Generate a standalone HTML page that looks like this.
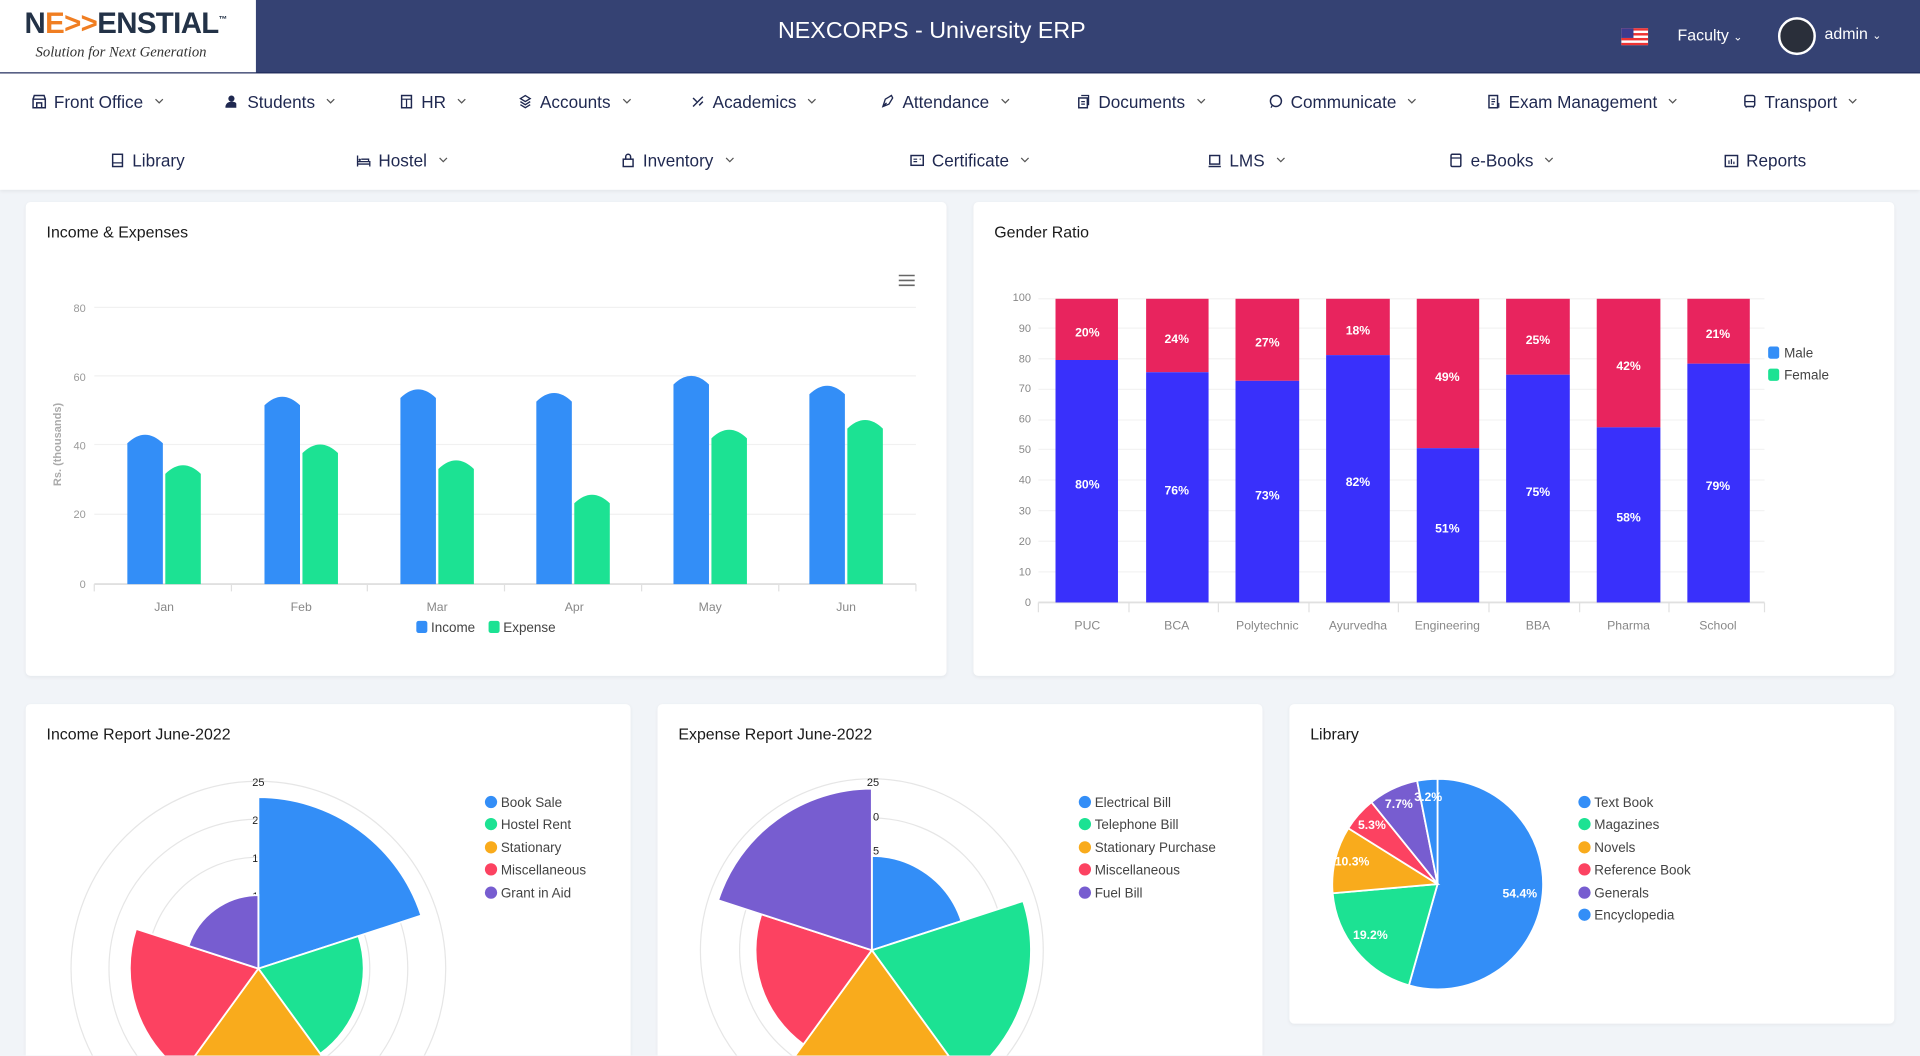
<!DOCTYPE html>
<html><head><meta charset="utf-8">
<style>
html,body{margin:0;padding:0;width:1920px;height:1056px;overflow:hidden;background:#f1f4f8;font-family:"Liberation Sans",sans-serif;}
#w{position:absolute;left:0;top:0;width:1568px;height:862px;overflow:hidden;transform:scale(1.22449);transform-origin:0 0;}
.hdr{position:absolute;left:0;top:0;width:1568px;height:59px;background:#354273;border-bottom:1px solid #1e2a5a;}
.logo{position:absolute;left:0;top:0;width:209px;height:59px;background:#fff;}
.nav{position:absolute;left:0;top:60px;width:1568px;height:95px;background:#fff;box-shadow:0 2px 3px rgba(0,0,0,.06);}
.ni{position:absolute;font-size:14px;color:#1f2850;white-space:nowrap;display:flex;align-items:center;gap:6px;}
.ni svg.ic{width:12px;height:12px;}
.ch{width:8px;height:6px;margin-left:3px}
.card{position:absolute;background:#fff;border-radius:4px;box-shadow:0 1px 3px rgba(0,0,0,.05);overflow:hidden;}
.ct{position:absolute;left:17px;top:17px;font-size:13px;color:#1a1a1a;}
svg text{font-family:"Liberation Sans",sans-serif;}
</style></head><body><div id="w">
<div class="hdr">
 <div class="logo">
  <div style="position:absolute;left:20px;top:6px;font-size:24px;font-weight:bold;color:#233247;letter-spacing:-0.5px">N<span style="color:#f07e22">E&gt;&gt;</span>ENSTIAL<sup style="font-size:7px">™</sup></div>
  <div style="position:absolute;left:29px;top:35px;font-size:12px;font-style:italic;color:#333;font-family:'Liberation Serif',serif">Solution for Next Generation</div>
 </div>
 <div style="position:absolute;left:0;width:1522px;top:15px;text-align:center;font-size:19px;color:#fff;">NEXCORPS - University ERP</div>
 <svg style="position:absolute;left:1324px;top:23px" width="22" height="14"><rect width="22" height="14" fill="#fff"/><g fill="#e33"><rect y="0" width="22" height="2"/><rect y="4" width="22" height="2"/><rect y="8" width="22" height="2"/><rect y="12" width="22" height="2"/></g><rect width="10" height="8" fill="#3c3b8e"/></svg>
 <div style="position:absolute;left:1370px;top:21px;font-size:13px;color:#fff">Faculty <span style="font-size:9px">⌄</span></div>
 <div style="position:absolute;left:1452px;top:14px;width:27px;height:27px;border-radius:50%;background:#2a2f3a;border:2px solid #fff"></div>
 <div style="position:absolute;left:1490px;top:20px;font-size:13px;color:#fff">admin <span style="font-size:9px">⌄</span></div>
</div>
<div class="nav">
 <svg width="0" height="0" style="position:absolute"><defs><polyline id="chv" points="1,1 4,4 7,1" fill="none" stroke="#555" stroke-width="1"/></defs></svg>
 <div class="ni" style="left:26px;top:15px"><svg class="ic" viewBox="0 0 12 12"><path d="M1 4h10v7H1zM1 4l1-3h8l1 3M4 11V7h4v4" fill="none" stroke="#1f2850" stroke-width="1.2"/></svg>Front Office<svg class="ch"><use href="#chv"/></svg></div>
 <div class="ni" style="left:184px;top:15px"><svg class="ic" viewBox="0 0 12 12"><circle cx="5" cy="3.5" r="2.5" fill="#1f2850"/><path d="M0 11c0-3 2-5 5-5s4 1 4 2v3z" fill="#1f2850"/></svg>Students<svg class="ch"><use href="#chv"/></svg></div>
 <div class="ni" style="left:326px;top:15px"><svg class="ic" viewBox="0 0 12 12"><rect x="2" y="1" width="8" height="10" fill="none" stroke="#1f2850" stroke-width="1.2"/><path d="M2 4h8M6 4v7" stroke="#1f2850"/></svg>HR<svg class="ch"><use href="#chv"/></svg></div>
 <div class="ni" style="left:423px;top:15px"><svg class="ic" viewBox="0 0 12 12"><path d="M6 1l4 2.5-4 2.5-4-2.5zM2 6l4 2.5 4-2.5M2 8.5l4 2.5 4-2.5" fill="none" stroke="#1f2850" stroke-width="1.1"/></svg>Accounts<svg class="ch"><use href="#chv"/></svg></div>
 <div class="ni" style="left:564px;top:15px"><svg class="ic" viewBox="0 0 12 12"><path d="M2 10L10 2M2 3l3 3M7 9l3-3" stroke="#1f2850" stroke-width="1.2" fill="none"/></svg>Academics<svg class="ch"><use href="#chv"/></svg></div>
 <div class="ni" style="left:719px;top:15px"><svg class="ic" viewBox="0 0 12 12"><path d="M2 10l2-6 5-3 1 2-3 5zM2 10l3-3" fill="none" stroke="#1f2850" stroke-width="1.1"/></svg>Attendance<svg class="ch"><use href="#chv"/></svg></div>
 <div class="ni" style="left:879px;top:15px"><svg class="ic" viewBox="0 0 12 12"><rect x="2" y="3" width="7" height="8" fill="none" stroke="#1f2850" stroke-width="1.2"/><path d="M4 1h6v8M4 6h3M4 8h3" stroke="#1f2850" fill="none"/></svg>Documents<svg class="ch"><use href="#chv"/></svg></div>
 <div class="ni" style="left:1036px;top:15px"><svg class="ic" viewBox="0 0 12 12"><circle cx="6" cy="5.5" r="4.5" fill="none" stroke="#1f2850" stroke-width="1.2"/><path d="M3 9l-1 2" stroke="#1f2850"/></svg>Communicate<svg class="ch"><use href="#chv"/></svg></div>
 <div class="ni" style="left:1214px;top:15px"><svg class="ic" viewBox="0 0 12 12"><rect x="2" y="1" width="7" height="10" fill="none" stroke="#1f2850" stroke-width="1.2"/><path d="M4 4h3M4 6h3M4 8h2M10 7v4" stroke="#1f2850"/></svg>Exam Management<svg class="ch"><use href="#chv"/></svg></div>
 <div class="ni" style="left:1423px;top:15px"><svg class="ic" viewBox="0 0 12 12"><rect x="2" y="1" width="8" height="9" rx="1.5" fill="none" stroke="#1f2850" stroke-width="1.2"/><path d="M2 6h8M3 11v-1M9 11v-1" stroke="#1f2850"/></svg>Transport<svg class="ch"><use href="#chv"/></svg></div>

 <div class="ni" style="left:90px;top:63px"><svg class="ic" viewBox="0 0 12 12"><rect x="2" y="1" width="8" height="10" fill="none" stroke="#1f2850" stroke-width="1.2"/><path d="M2 8h8" stroke="#1f2850"/></svg>Library</div>
 <div class="ni" style="left:291px;top:63px"><svg class="ic" viewBox="0 0 12 12"><path d="M1 2v9M1 9h10v2M1 7h10v2M4 5h6v2" fill="none" stroke="#1f2850" stroke-width="1.1"/><circle cx="2.8" cy="5.5" r="1" fill="#1f2850"/></svg>Hostel<svg class="ch"><use href="#chv"/></svg></div>
 <div class="ni" style="left:507px;top:63px"><svg class="ic" viewBox="0 0 12 12"><rect x="2" y="5" width="8" height="6" fill="none" stroke="#1f2850" stroke-width="1.2"/><path d="M4 5V3a2 2 0 014 0v2" fill="none" stroke="#1f2850" stroke-width="1.2"/></svg>Inventory<svg class="ch"><use href="#chv"/></svg></div>
 <div class="ni" style="left:743px;top:63px"><svg class="ic" viewBox="0 0 12 12"><rect x="1" y="2" width="10" height="8" fill="none" stroke="#1f2850" stroke-width="1.2"/><path d="M3 5h3M3 7h3M8 5h1" stroke="#1f2850"/></svg>Certificate<svg class="ch"><use href="#chv"/></svg></div>
 <div class="ni" style="left:986px;top:63px"><svg class="ic" viewBox="0 0 12 12"><rect x="2" y="2" width="8" height="7" fill="none" stroke="#1f2850" stroke-width="1.2"/><path d="M1 11h10" stroke="#1f2850" stroke-width="1.2"/></svg>LMS<svg class="ch"><use href="#chv"/></svg></div>
 <div class="ni" style="left:1183px;top:63px"><svg class="ic" viewBox="0 0 12 12"><rect x="2" y="1" width="8" height="10" rx="1" fill="none" stroke="#1f2850" stroke-width="1.2"/><path d="M2 4h8" stroke="#1f2850"/></svg>e-Books<svg class="ch"><use href="#chv"/></svg></div>
 <div class="ni" style="left:1408px;top:63px"><svg class="ic" viewBox="0 0 12 12"><rect x="1" y="2" width="10" height="9" fill="none" stroke="#1f2850" stroke-width="1.2"/><path d="M4 9V6M6 9V5M8 9V7" stroke="#1f2850"/></svg>Reports</div>
</div>

<div class="card" style="left:21px;top:165px;width:752px;height:387px">
 <div class="ct">Income &amp; Expenses</div>
</div>
<svg style="position:absolute;left:0;top:0" width="1568" height="862">
 <g stroke="#666" stroke-width="1.3"><path d="M734 225h13M734 229h13M734 233h13"/><path d="M1508 225h13M1508 229h13M1508 233h13"/></g>
 <g stroke="#f1f1f1"><path d="M77 251h671M77 307h671M77 363h671M77 420h671"/></g>
 <path d="M77 477h671" stroke="#e0e0e0" stroke-width="1.5"/>
 <g stroke="#e0e0e0"><path d="M77 477v6M189 477v6M300 477v6M412 477v6M524 477v6M636 477v6M748 477v6"/></g>
 <g font-size="9" fill="#999" text-anchor="end"><text x="70" y="255">80</text><text x="70" y="311">60</text><text x="70" y="367">40</text><text x="70" y="423">20</text><text x="70" y="480">0</text></g>
 <text transform="translate(50,397) rotate(-90)" font-size="9" font-weight="bold" fill="#aaa">Rs. (thousands)</text>
 <g font-size="10" fill="#888" text-anchor="middle"><text x="134" y="499">Jan</text><text x="246" y="499">Feb</text><text x="357" y="499">Mar</text><text x="469" y="499">Apr</text><text x="580" y="499">May</text><text x="691" y="499">Jun</text></g>
 <g fill="#338ef7">
  <path d="M104 477V362q14.5-14 29 0V477z"/>
  <path d="M216 477V331q14.5-14 29 0V477z"/>
  <path d="M327 477V325q14.5-14 29 0V477z"/>
  <path d="M438 477V328q14.5-14 29 0V477z"/>
  <path d="M550 477V314q14.5-14 29 0V477z"/>
  <path d="M661 477V322q14.5-14 29 0V477z"/>
 </g>
 <g fill="#1ce293">
  <path d="M135 477V387q14.5-14 29 0V477z"/>
  <path d="M247 477V370q14.5-14 29 0V477z"/>
  <path d="M358 477V383q14.5-14 29 0V477z"/>
  <path d="M469 477V411q14.5-14 29 0V477z"/>
  <path d="M581 477V358q14.5-14 29 0V477z"/>
  <path d="M692 477V350q14.5-14 29 0V477z"/>
 </g>
 <rect x="340" y="507" width="9" height="10" rx="2" fill="#338ef7"/><text x="352" y="516" font-size="11" fill="#444">Income</text>
 <rect x="399" y="507" width="9" height="10" rx="2" fill="#1ce293"/><text x="411" y="516" font-size="11" fill="#444">Expense</text>
</svg>

<div class="card" style="left:795px;top:165px;width:752px;height:387px">
 <div class="ct">Gender Ratio</div>
</div>
<svg style="position:absolute;left:0;top:0" width="1568" height="862">
 <g stroke="#f3f3f3"><path d="M848 244h593M848 268h593M848 293h593M848 318h593M848 343h593M848 367h593M848 392h593M848 417h593M848 442h593M848 467h593"/></g>
 <path d="M848 492h593" stroke="#e0e0e0" stroke-width="1.5"/>
 <g stroke="#e0e0e0"><path d="M848 492v8M922 492v8M995 492v8M1069 492v8M1142 492v8M1216 492v8M1290 492v8M1363 492v8M1441 492v8"/></g>
 <g font-size="9" fill="#888" text-anchor="end"><text x="842" y="246">100</text><text x="842" y="271">90</text><text x="842" y="296">80</text><text x="842" y="320">70</text><text x="842" y="345">60</text><text x="842" y="370">50</text><text x="842" y="395">40</text><text x="842" y="420">30</text><text x="842" y="445">20</text><text x="842" y="470">10</text><text x="842" y="495">0</text></g>
 <g fill="#e8245e">
  <rect x="862" y="244" width="51" height="50"/><rect x="936" y="244" width="51" height="60"/><rect x="1009" y="244" width="52" height="67"/><rect x="1083" y="244" width="52" height="46"/><rect x="1157" y="244" width="51" height="122"/><rect x="1230" y="244" width="52" height="62"/><rect x="1304" y="244" width="52" height="105"/><rect x="1378" y="244" width="51" height="53"/>
 </g>
 <g fill="#3930fb">
  <rect x="862" y="294" width="51" height="198"/><rect x="936" y="304" width="51" height="188"/><rect x="1009" y="311" width="52" height="181"/><rect x="1083" y="290" width="52" height="202"/><rect x="1157" y="366" width="51" height="126"/><rect x="1230" y="306" width="52" height="186"/><rect x="1304" y="349" width="52" height="143"/><rect x="1378" y="297" width="51" height="195"/>
 </g>
 <g font-size="10" font-weight="bold" fill="#fff" text-anchor="middle">
  <text x="888" y="275">20%</text><text x="961" y="280">24%</text><text x="1035" y="283">27%</text><text x="1109" y="273">18%</text><text x="1182" y="311">49%</text><text x="1256" y="281">25%</text><text x="1330" y="302">42%</text><text x="1403" y="276">21%</text>
  <text x="888" y="399">80%</text><text x="961" y="404">76%</text><text x="1035" y="408">73%</text><text x="1109" y="397">82%</text><text x="1182" y="435">51%</text><text x="1256" y="405">75%</text><text x="1330" y="426">58%</text><text x="1403" y="400">79%</text>
 </g>
 <g font-size="10" fill="#888" text-anchor="middle"><text x="888" y="514">PUC</text><text x="961" y="514">BCA</text><text x="1035" y="514">Polytechnic</text><text x="1109" y="514">Ayurvedha</text><text x="1182" y="514">Engineering</text><text x="1256" y="514">BBA</text><text x="1330" y="514">Pharma</text><text x="1403" y="514">School</text></g>
 <rect x="1444" y="283" width="9" height="10" rx="2" fill="#338ef7"/><text x="1457" y="292" font-size="11" fill="#444">Male</text>
 <rect x="1444" y="301" width="9" height="10" rx="2" fill="#1ce293"/><text x="1457" y="310" font-size="11" fill="#444">Female</text>
</svg>

<div class="card" style="left:21px;top:575px;width:494px;height:287px;border-radius:4px 4px 0 0"><div class="ct">Income Report June-2022</div></div>
<div class="card" style="left:537px;top:575px;width:494px;height:287px;border-radius:4px 4px 0 0"><div class="ct">Expense Report June-2022</div></div>
<div class="card" style="left:1053px;top:575px;width:494px;height:261px"><div class="ct">Library</div></div>

<svg style="position:absolute;left:0;top:0" width="1568" height="862">
 <defs><clipPath id="c1"><rect x="21" y="575" width="494" height="287"/></clipPath><clipPath id="c2"><rect x="537" y="575" width="494" height="287"/></clipPath></defs>
 <g clip-path="url(#c1)">
  <g fill="none" stroke="#e6e6e6"><circle cx="211" cy="791" r="153"/><circle cx="211" cy="791" r="122"/><circle cx="211" cy="791" r="91"/><circle cx="211" cy="791" r="60"/></g>
  <g font-size="9" fill="#222" text-anchor="end"><text x="216" y="642">25</text><text x="211" y="673">2</text><text x="211" y="704">1</text><text x="211" y="735">1</text></g>
  <g stroke="#fff" stroke-width="1.5">
   <path d="M211 791L211 651A140 140 0 0 1 344.1 747.7Z" fill="#338ef7"/>
   <path d="M211 791L292.8 764.4A86 86 0 0 1 261.6 860.6Z" fill="#1ce293"/>
   <path d="M211 791L275.7 880A110 110 0 0 1 146.3 880Z" fill="#f9ab1c"/>
   <path d="M211 791L149.3 875.9A105 105 0 0 1 111.1 758.6Z" fill="#fc4261"/>
   <path d="M211 791L153.9 772.5A60 60 0 0 1 211 731Z" fill="#775dd0"/>
  </g>
 </g>
 <g font-size="11" fill="#444">
  <circle cx="401" cy="655" r="5" fill="#338ef7"/><text x="409" y="659">Book Sale</text>
  <circle cx="401" cy="673" r="5" fill="#1ce293"/><text x="409" y="677">Hostel Rent</text>
  <circle cx="401" cy="692" r="5" fill="#f9ab1c"/><text x="409" y="696">Stationary</text>
  <circle cx="401" cy="710" r="5" fill="#fc4261"/><text x="409" y="714">Miscellaneous</text>
  <circle cx="401" cy="729" r="5" fill="#775dd0"/><text x="409" y="733">Grant in Aid</text>
 </g>

 <g clip-path="url(#c2)">
  <g fill="none" stroke="#e6e6e6"><circle cx="712" cy="776" r="140"/><circle cx="712" cy="776" r="108"/><circle cx="712" cy="776" r="77"/></g>
  <g font-size="9" fill="#222" text-anchor="end"><text x="718" y="642">25</text><text x="718" y="670">0</text><text x="718" y="698">5</text></g>
  <g stroke="#fff" stroke-width="1.5">
   <path d="M712 776L712 699A77 77 0 0 1 785.2 752.2Z" fill="#338ef7"/>
   <path d="M712 776L835.6 735.8A130 130 0 0 1 788.4 881.2Z" fill="#1ce293"/>
   <path d="M712 776L776.7 865A110 110 0 0 1 647.3 865Z" fill="#f9ab1c"/>
   <path d="M712 776L656.1 852.9A95 95 0 0 1 621.7 746.6Z" fill="#fc4261"/>
   <path d="M712 776L586.5 735.2A132 132 0 0 1 712 644Z" fill="#775dd0"/>
  </g>
 </g>
 <g font-size="11" fill="#444">
  <circle cx="886" cy="655" r="5" fill="#338ef7"/><text x="894" y="659">Electrical Bill</text>
  <circle cx="886" cy="673" r="5" fill="#1ce293"/><text x="894" y="677">Telephone Bill</text>
  <circle cx="886" cy="692" r="5" fill="#f9ab1c"/><text x="894" y="696">Stationary Purchase</text>
  <circle cx="886" cy="710" r="5" fill="#fc4261"/><text x="894" y="714">Miscellaneous</text>
  <circle cx="886" cy="729" r="5" fill="#775dd0"/><text x="894" y="733">Fuel Bill</text>
 </g>

 <g stroke="#fff" stroke-width="1.5">
  <path d="M1174 722L1174 636A86 86 0 1 1 1150.6 804.7Z" fill="#338ef7"/>
  <path d="M1174 722L1150.6 804.7A86 86 0 0 1 1088.3 729.5Z" fill="#1ce293"/>
  <path d="M1174 722L1088.3 729.5A86 86 0 0 1 1101.1 676.4Z" fill="#f9ab1c"/>
  <path d="M1174 722L1101.1 676.4A86 86 0 0 1 1120 655.1Z" fill="#fc4261"/>
  <path d="M1174 722L1120 655.1A86 86 0 0 1 1157.3 637.6Z" fill="#775dd0"/>
  <path d="M1174 722L1157.3 637.6A86 86 0 0 1 1174 636Z" fill="#338ef7"/>
 </g>
 <g font-size="10" font-weight="bold" fill="#fff">
  <text x="1227" y="733">54.4%</text><text x="1105" y="767">19.2%</text><text x="1090" y="707">10.3%</text><text x="1109" y="677">5.3%</text><text x="1131" y="660">7.7%</text><text x="1155" y="654">3.2%</text>
 </g>
 <g font-size="11" fill="#444">
  <circle cx="1294" cy="655" r="5" fill="#338ef7"/><text x="1302" y="659">Text Book</text>
  <circle cx="1294" cy="673" r="5" fill="#1ce293"/><text x="1302" y="677">Magazines</text>
  <circle cx="1294" cy="692" r="5" fill="#f9ab1c"/><text x="1302" y="696">Novels</text>
  <circle cx="1294" cy="710" r="5" fill="#fc4261"/><text x="1302" y="714">Reference Book</text>
  <circle cx="1294" cy="729" r="5" fill="#775dd0"/><text x="1302" y="733">Generals</text>
  <circle cx="1294" cy="747" r="5" fill="#338ef7"/><text x="1302" y="751">Encyclopedia</text>
 </g>
</svg>
</div></body></html>
